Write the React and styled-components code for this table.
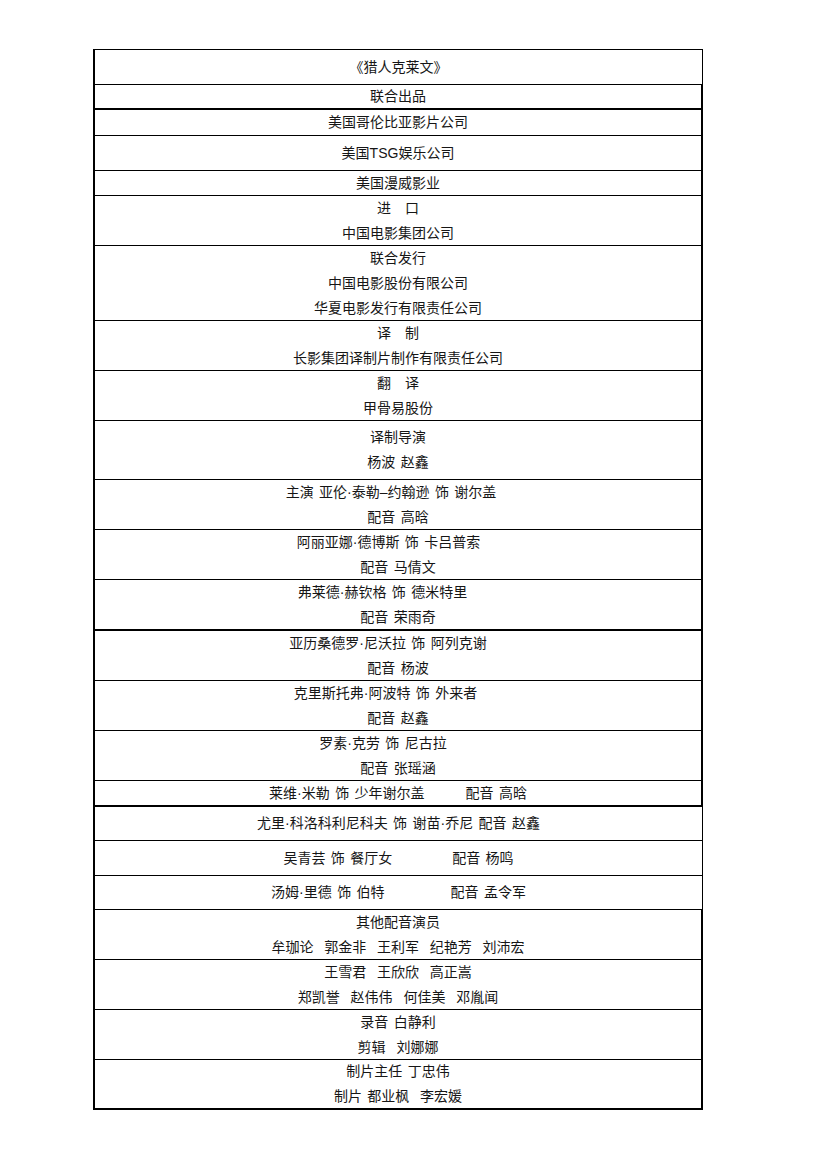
import React from "react";
import styled, { createGlobalStyle } from "styled-components";

const Global = createGlobalStyle`
  html, body { margin: 0; padding: 0; background: #ffffff; }
  body { font-family: "Liberation Sans", "Noto Sans CJK SC", sans-serif; }
`;

const Page = styled.div`
  width: 830px;
  min-height: 1158px;
  padding: 49px 0 0 93px;
  box-sizing: border-box;
`;

const Table = styled.div`
  width: 610px;
  display: flex;
  flex-direction: column;
  border-top: 1px solid #000;
  border-left: 2px solid #000;
  box-sizing: border-box;
`;

const Row = styled.div`
  height: ${(p) => p.$h}px;
  box-sizing: border-box;
  display: flex;
  flex-direction: column;
  justify-content: center;
  align-items: center;
  border-bottom: ${(p) => p.$line || 1}px solid #000;
  border-right: ${(p) => p.$edge || 2}px solid #000;
`;

const Line = styled.div`
  flex: none;
  height: 25px;
  line-height: 25px;
  font-family: "Liberation Sans", "Noto Sans CJK SC", sans-serif;
  font-size: 14px;
  color: #161616;
  white-space: pre;
  word-spacing: 1.5px;
  padding-right: ${(p) => p.$shift || 0}px;
  display: flex;
  align-items: center;
`;

const Gap = styled.span`
  display: inline-block;
  width: ${(p) => p.$w}px;
`;

const rows = [
  { h: 35, edge: 1, lines: ["《猎人克莱文》"] },
  { h: 25, line: 2, lines: ["联合出品"] },
  { h: 26, lines: ["美国哥伦比亚影片公司"] },
  { h: 35, lines: ["美国TSG娱乐公司"] },
  { h: 25, lines: ["美国漫威影业"] },
  { h: 50, lines: ["进　口", "中国电影集团公司"] },
  { h: 75, lines: ["联合发行", "中国电影股份有限公司", "华夏电影发行有限责任公司"] },
  { h: 50, lines: ["译　制", "长影集团译制片制作有限责任公司"] },
  { h: 50, lines: ["翻　译", "甲骨易股份"] },
  { h: 59, lines: ["译制导演", "杨波 赵鑫"] },
  { h: 50, lines: [{ t: "主演 亚伦·泰勒–约翰逊 饰 谢尔盖", s: 14 }, "配音 高晗"] },
  { h: 50, lines: [{ t: "阿丽亚娜·德博斯 饰 卡吕普索", s: 19 }, "配音 马倩文"] },
  { h: 51, line: 2, lines: [{ t: "弗莱德·赫钦格 饰 德米特里", s: 31 }, "配音 荣雨奇"] },
  { h: 50, lines: [{ t: "亚历桑德罗·尼沃拉 饰 阿列克谢", s: 20 }, "配音 杨波"] },
  { h: 50, lines: [{ t: "克里斯托弗·阿波特 饰 外来者", s: 25 }, "配音 赵鑫"] },
  { h: 50, lines: [{ t: "罗素·克劳 饰 尼古拉", s: 30 }, "配音 张瑶涵"] },
  { h: 26, line: 2, lines: [{ a: "莱维·米勒 饰 少年谢尔盖", g: 41, b: "配音 高晗" }] },
  { h: 34, edge: 1, lines: ["尤里·科洛科利尼科夫 饰 谢苗·乔尼 配音 赵鑫"] },
  { h: 35, edge: 1, lines: [{ a: "吴青芸 饰 餐厅女", g: 60, b: "配音 杨鸣" }] },
  { h: 34, edge: 1, lines: [{ a: "汤姆·里德 饰 伯特", g: 66, b: "配音 孟令军" }] },
  { h: 50, lines: ["其他配音演员", "牟珈论  郭金非  王利军  纪艳芳  刘沛宏"] },
  { h: 50, lines: ["王雪君  王欣欣  高正嵩", "郑凯誉  赵伟伟  何佳美  邓胤闻"] },
  { h: 50, lines: ["录音 白静利", "剪辑  刘娜娜"] },
  { h: 50, line: 2, lines: ["制片主任 丁忠伟", "制片 都业枫  李宏媛"] },
];

function CreditLine({ item }) {
  if (typeof item === "string") return <Line>{item}</Line>;
  if (item.t) return <Line $shift={item.s}>{item.t}</Line>;
  return (
    <Line>
      {item.a}
      <Gap $w={item.g} />
      {item.b}
    </Line>
  );
}

export default function App() {
  return (
    <>
      <Global />
      <Page>
        <Table>
          {rows.map((r, i) => (
            <Row key={i} $h={r.h} $line={r.line} $edge={r.edge}>
              {r.lines.map((l, j) => (
                <CreditLine key={j} item={l} />
              ))}
            </Row>
          ))}
        </Table>
      </Page>
    </>
  );
}
